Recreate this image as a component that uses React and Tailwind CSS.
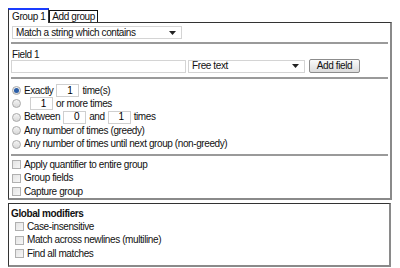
import React from "react";

const font = { fontFamily: '"Liberation Sans", Arial, sans-serif' };

const Radio = ({ checked }) => (
  <span className="inline-flex w-[9px] h-[9px] rounded-full border border-[#a9a9a9] bg-gradient-to-b from-[#f4f4f4] to-[#d8d8d8] items-center justify-center shrink-0">
    {checked && <span className="w-[5px] h-[5px] rounded-full bg-[#2a5ea8]" />}
  </span>
);

const Check = () => (
  <span className="inline-block w-[9px] h-[9px] border border-[#b0b0b0] bg-gradient-to-br from-[#e4e4e4] to-[#f6f6f6] shrink-0" />
);

const NumBox = ({ value }) => (
  <span className="inline-flex w-[23px] h-[13px] border border-[#cfcfcf] items-center justify-end pr-[6px] text-black">
    {value}
  </span>
);

const Separator = () => <div className="h-[2px] bg-[#9a9a9a] mx-[1px]" />;

const Caret = () => (
  <svg width="7" height="4" viewBox="0 0 7 4" className="shrink-0">
    <path d="M0 0h7L3.5 4z" fill="#222" />
  </svg>
);

export default function App() {
  return (
    <div className="bg-white w-[400px] h-[268px] pl-2 pt-2 text-[10px] tracking-[-0.4px] text-[#111] leading-none" style={font}>
      {/* Tabs */}
      <div className="flex items-end h-[14px]">
        <div className="h-[15px] px-[3px] border-l border-r border-[#333] border-t-2 border-t-[#1a3cff] bg-white flex items-center relative z-10 -mb-[1px]">
          Group 1
        </div>
        <div className="h-[12px] px-[2px] border border-[#111] border-b-0 flex items-center">
          Add group
        </div>
      </div>

      {/* Group panel */}
      <div className="w-[384px] h-[178px] border-l border-t border-[#333] border-r-2 border-b-2 border-r-[#8a8a8a] border-b-[#8a8a8a] pl-[1px] pr-[1px]">
        <div className="pt-[3px] pl-[2px]">
          <div className="w-[170px] h-[13px] border border-[#d4d4d4] flex items-center justify-between pl-[3px] pr-[5px]">
            <span>Match a string which contains</span>
            <Caret />
          </div>
        </div>
        <div className="mt-[3px]">
          <Separator />
        </div>
        <div className="pl-[2px] pt-[6px] h-[12px]">Field 1</div>
        <div className="flex items-center pl-[1px] mt-[3px]">
          <div className="w-[175px] h-[13px] border border-[#d4d4d4]" />
          <div className="w-[117px] h-[13px] ml-[2px] border border-[#d4d4d4] flex items-center justify-between pl-[3px] pr-[5px]">
            <span>Free text</span>
            <Caret />
          </div>
          <div className="ml-[4px] w-[51px] h-[14px] border border-[#8c8c8c] rounded-[2px] bg-gradient-to-b from-[#fafafa] to-[#dcdcdc] flex items-center justify-center">
            Add field
          </div>
        </div>
        <div className="mt-[4px]">
          <Separator />
        </div>

        {/* Quantifier */}
        <div className="flex flex-col pl-[2px] pt-[5px]">
          <div className="flex items-center gap-[3px] h-[13px]">
            <Radio checked />
            <span>Exactly</span>
            <NumBox value="1" />
            <span>time(s)</span>
          </div>
          <div className="flex items-center gap-[3px] h-[13.5px]">
            <Radio />
            <span className="w-[3px]" />
            <NumBox value="1" />
            <span>or more times</span>
          </div>
          <div className="flex items-center gap-[3px] h-[13.5px]">
            <Radio />
            <span>Between</span>
            <NumBox value="0" />
            <span>and</span>
            <NumBox value="1" />
            <span>times</span>
          </div>
          <div className="flex items-center gap-[3px] h-[13.5px]">
            <Radio />
            <span>Any number of times (greedy)</span>
          </div>
          <div className="flex items-center gap-[3px] h-[13.5px]">
            <Radio />
            <span>Any number of times until next group (non-greedy)</span>
          </div>
        </div>
        <div className="mt-[3px]">
          <Separator />
        </div>

        <div className="flex flex-col pl-[2px] pt-[2px]">
          <div className="flex items-center gap-[3px] h-[13.5px]">
            <Check />
            <span>Apply quantifier to entire group</span>
          </div>
          <div className="flex items-center gap-[3px] h-[13.5px]">
            <Check />
            <span>Group fields</span>
          </div>
          <div className="flex items-center gap-[3px] h-[13.5px]">
            <Check />
            <span>Capture group</span>
          </div>
        </div>
      </div>

      {/* Global modifiers */}
      <div className="mt-[3px] w-[383px] h-[64px] border-l border-t border-[#333] border-r-2 border-b-2 border-r-[#8a8a8a] border-b-[#8a8a8a] pl-[2px] pt-[5px]">
        <div className="font-bold h-[11px]">Global modifiers</div>
        <div className="flex flex-col pl-[4px]">
          <div className="flex items-center gap-[3px] h-[13.5px]">
            <Check />
            <span>Case-insensitive</span>
          </div>
          <div className="flex items-center gap-[3px] h-[13.5px]">
            <Check />
            <span>Match across newlines (multiline)</span>
          </div>
          <div className="flex items-center gap-[3px] h-[13.5px]">
            <Check />
            <span>Find all matches</span>
          </div>
        </div>
      </div>
    </div>
  );
}
